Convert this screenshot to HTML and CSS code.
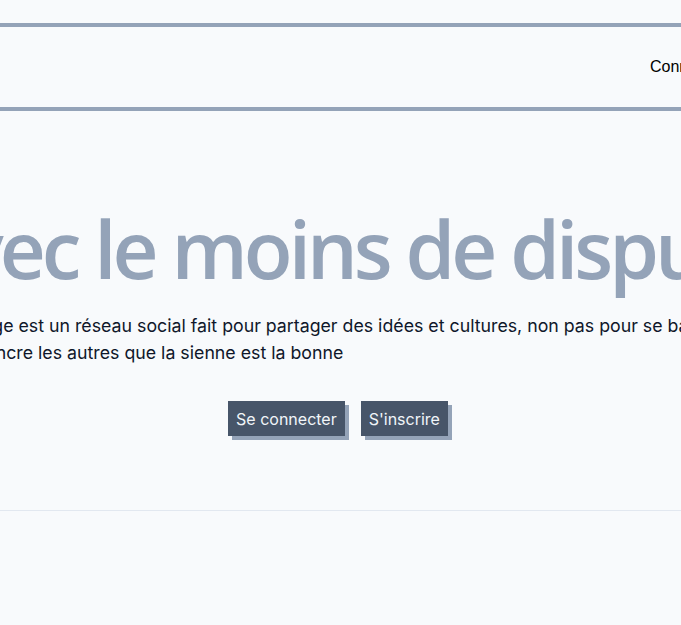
FILE: index.html
```html
<!DOCTYPE html>
<html lang="fr">
<head>
<meta charset="utf-8">
<title>Échange</title>
<link rel="stylesheet" href="styles.css">
</head>
<body>
  <header class="site-header">
    <nav class="nav">
      <a class="nav-link" href="#">Connexion</a>
    </nav>
  </header>
  <main class="hero">
    <h1 class="hero-title">Échangez avec le moins de disputes possible</h1>
    <div class="hero-body">
      <p class="hero-text">Échange est un réseau social fait pour partager des idées et cultures, non pas pour se battre et convaincre les autres que la sienne est la bonne</p>
      <div class="hero-actions">
        <a class="btn" href="#">Se connecter</a>
        <a class="btn" href="#">S'inscrire</a>
      </div>
    </div>
  </main>
</body>
</html>
```
FILE: styles.css
```css
html, body {
  margin: 0;
  padding: 0;
  overflow: hidden;
  background: #f8fafc;
}
body {
  padding-top: 23px;
  font-family: Inter, "Liberation Sans", sans-serif;
}
.site-header {
  border-top: 4px solid #94a3b8;
  border-bottom: 4px solid #94a3b8;
  height: 80px;
  display: flex;
  justify-content: center;
}
.nav {
  flex: 0 0 800px;
  display: flex;
  justify-content: flex-end;
  align-items: center;
  padding-right: 14px;
  box-sizing: border-box;
}
.nav-link {
  font-family: "Liberation Sans", Arial, sans-serif;
  font-size: 16px;
  color: #000;
  text-decoration: none;
}
.hero {
  display: flex;
  flex-direction: column;
  align-items: center;
  height: 400px;
  box-sizing: border-box;
  border-bottom: 1px solid #e2e8f0;
  padding-top: 97px;
}
.hero-title {
  margin: 0;
  white-space: nowrap;
  font-family: "Open Sans", sans-serif;
  font-weight: 600;
  letter-spacing: -0.05em;
  font-size: 80px;
  line-height: 80px;
  color: #94a3b8;
}
.hero-body {
  flex: 0 0 auto;
  width: 800px;
  display: flex;
  flex-direction: column;
}
.hero-text {
  margin: 24px 0 0;
  font-size: 17.75px;
  line-height: 27px;
  color: #0f172a;
}
.hero-actions {
  margin-top: 35px;
  padding-right: 5px;
  display: flex;
  justify-content: center;
  gap: 16px;
}
.btn {
  background: #475569;
  color: #f1f5f9;
  text-decoration: none;
  font-size: 16px;
  line-height: 24px;
  padding: 6px 8px 5px;
  box-shadow: 4px 4px 0 #94a3b8;
}
```
